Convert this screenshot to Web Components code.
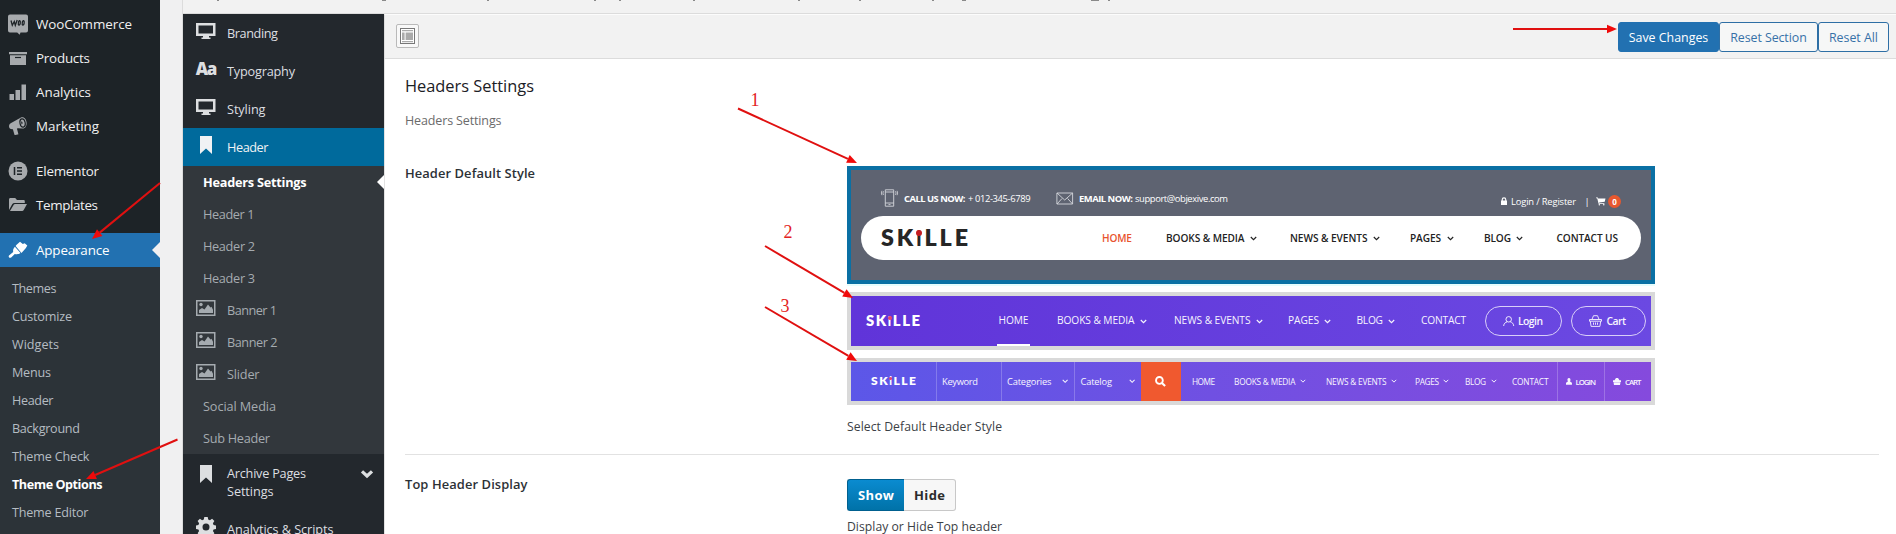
<!DOCTYPE html>
<html lang="en">
<head>
<meta charset="utf-8">
<title>Theme Options</title>
<style>
html,body{margin:0;padding:0}
body{width:1896px;height:534px;overflow:hidden;background:#f0f0f1;font-family:"Open Sans","Noto Sans",sans-serif}
</style>
</head>
<body>
<theme-options-page></theme-options-page>
<script>
const define = (name, html, after) => {
  const t = document.createElement('template');
  t.innerHTML = html;
  customElements.define(name, class extends HTMLElement {
    connectedCallback() {
      if (this.shadowRoot) return;
      this.attachShadow({mode: 'open'}).append(document.importNode(t.content, true));
      if (after) after.call(this, this.shadowRoot);
    }
  });
};

/* A label that tracks its letters so that it fills the width in its "w" attribute. */
define('fit-text', `<style>:host{display:inline-block;flex:none;white-space:nowrap}span{display:inline-block}</style><span><slot></slot></span>`, function (r) {
  const w = +this.getAttribute('w'), s = r.querySelector('span');
  this.style.width = w + 'px';
  const n = this.textContent.length;
  s.style.letterSpacing = ((w - s.getBoundingClientRect().width) / (n - (n > 1 ? 1 : 0))) + 'px';
});

/* Icons */
const ICONS = {
  woo: [20, 20, '<path d="M2 .5h16a2 2 0 0 1 2 2v14a2 2 0 0 1-2 2h-5.500l-.8 2.300-2.500-2.300H2a2 2 0 0 1-2-2v-14a2 2 0 0 1 2-2z"/><path d="M3 6.500l1.300 4.800L6.300 7.500l1 3.800L9.200 6M11.700 6.700c-1.200-.3-2 4-.8 4.400 1.300.3 2-4 .8-4.400zM15.600 6.700c-1.200-.3-2 4-.8 4.400 1.300.3 2-4 .8-4.400z" fill="none" stroke="#1d2327" stroke-width="1.300"/>'],
  box: [20, 20, '<path d="M1 4h18v2.300H1zM2 7.300h16V17H2z"/><path d="M7 9.500h6" stroke="#1d2327" stroke-width="1.200"/>'],
  bars: [20, 20, '<path d="M1.500 12h4.500v6H1.500zM7.500 8h4.500v10H7.500zM13.500 2.500H18V18h-4.500z"/>'],
  horn: [20, 20, '<path d="M13 1.500c3.200-1 5.500 2 5.600 5.500.1 3.500-1.800 5.800-4 5.500l-4.500-.3-1.200.2 1.400 5.300c.1.600-.1.800-.7.900l-2.300.4c-.5.100-.8-.1-.9-.6l-1.500-5.200C2.500 13.500 1 12 1 10.200c0-1.900 1-3 3-3.800z"/><ellipse cx="14.600" cy="7" rx="2.600" ry="4.200" transform="rotate(-12 14.600 7)" fill="none" stroke="#1d2327" stroke-width="1.200"/><path d="M13 5.500c1.800-.2 2.200 2 .6 3z" fill="#1d2327"/>'],
  elementor: [20, 20, '<circle cx="10" cy="10" r="9.500"/><path d="M6.500 6v8M9 6.700h5M9 10h5M9 13.300h5" stroke="#1d2327" stroke-width="1.500"/>'],
  folder: [20, 20, '<path d="M1 15V4.500C1 3.600 1.500 3 2.500 3h4.700L9 5h6.500c.8 0 1.300.5 1.300 1.300V8H6.500c-1 0-1.700.4-2.300 1.200z"/><path d="M2 16l3.700-6.200c.3-.5.700-.7 1.300-.7h12L15.700 15c-.4.700-.8 1-1.500 1z"/>'],
  brush: [20, 20, '<path d="M8.600 4.700L12 1.800l2.800 2.300L16.700 3.300 19.300 5.500 17.900 8 13.500 12.900 7.600 6z"/><path d="M6.900 6.700l5.600 6.400c-1.600 1.300-3.700 1.300-5.700.9L3.200 17.400c-1.500 1.200-3.200-.4-2.200-2L5.200 12c-.4-2 .2-3.900 1.700-5.300z"/>'],
  desktop: [20, 16, '<path fill-rule="evenodd" d="M0 0h19.500v13H13v1.500h1.500V16h-9v-1.500H7V13H0zM2.500 2.500v8h14.500v-8z"/>'],
  mark: [12, 18, '<path d="M0 0h12v18l-6-5.500L0 18z"/>'],
  image: [20, 16, '<path fill-rule="evenodd" d="M0 0h19.500v16H0zM1.500 1.500v13h16.500v-13z"/><circle cx="5" cy="4.500" r="1.700"/><path d="M3 13v-3l3-2 2.500 1.500 3.500-5 2.500 3 1-.8 1.500 3V13z"/>'],
  down: [14, 10, '<path d="M2 2.300l5 4.700 5-4.700" fill="none" stroke="currentColor" stroke-width="3.200"/>'],
  gear: [20, 20, '<path fill-rule="evenodd" d="M8.300 0h3.400l.5 2.600 1.700.7L16.100 1.800l2.300 2.300-1.500 2.200.7 1.700 2.400.5v3.400l-2.400.5-.7 1.700 1.500 2.200-2.300 2.300-2.200-1.500-1.700.7-.5 2.400H8.300l-.5-2.400-1.700-.7-2.200 1.500-2.300-2.300 1.500-2.200-.7-1.700L0 11.900V8.500L2.400 8l.7-1.700-1.500-2.200 2.300-2.300 2.200 1.500 1.700-.7zM10 6.500a3.500 3.500 0 1 0 0 7 3.500 3.500 0 0 0 0-7z"/>'],
  layout: [15, 16, '<rect x=".5" y=".5" width="14" height="15" fill="#fff" stroke="#777"/><path d="M2 2h11v1.200H2zM2 4.500h2.600v7.500H2zM5.600 4.500H13v7.500H5.600zM2 13h11v1.200H2z" fill="#aaa"/>'],
  caret: [7, 5, '<path d="M.8 1l2.700 2.700L6.200 1" fill="none" stroke="currentColor" stroke-width="1.150"/>'],
  phone: [17, 18, '<path d="M4.300.8h8.400v16.400H4.300zM4.300 3h8.400M4.300 14h8.400M7.500 15.600h2" fill="none" stroke="currentColor" stroke-width=".9"/><path d="M2.500 2.200Q1.300 4 2.500 6M.9 1.800Q-.2 4 .9 6.200M14.500 2.200Q15.700 4 14.500 6M16.100 1.800Q17.200 4 16.100 6.200" fill="none" stroke="currentColor" stroke-width=".8"/>'],
  mail: [18, 13, '<path d="M.9 1h15.700v11H.9zM1 1l7.700 7L16.600 1M1 12l5-5.500M16.600 12l-5-5.500" fill="none" stroke="currentColor" stroke-width=".9"/>'],
  lock: [6, 8, '<path fill-rule="evenodd" d="M.7 3.500V2.600a2.300 2.300 0 0 1 4.600 0v.9H6V8H0V3.500zm1.100 0h2.400v-.9a1.200 1.200 0 0 0-2.400 0z"/>'],
  cart: [10, 9, '<path d="M0 .5h1.900l.4 1H10L9.200 5 3.300 5.700l.2.700h5.300v.8H2.700L1.300 1.400H0z"/><circle cx="3.500" cy="8.200" r=".8"/><circle cx="8.200" cy="8.200" r=".8"/>'],
  user: [12, 11, '<circle cx="6" cy="3.500" r="2.900" fill="none" stroke="currentColor"/><path d="M.7 10.500C.9 8 2.400 6.600 4.300 6.200M7.700 6.200c1.900.4 3.400 1.800 3.600 4.300" fill="none" stroke="currentColor"/>'],
  basket: [13, 12, '<path d="M.5 4.500h12v1.700H.5zM1.300 6.200l.8 5.200h8.800l.8-5.200M3 4.300L4.500.7h4L10 4.300M4.500 7.500v2.300M6.500 7.500v2.300M8.500 7.500v2.300" fill="none" stroke="currentColor" stroke-width=".9"/>'],
  search: [12, 12, '<circle cx="4.800" cy="4.800" r="3.700" fill="none" stroke="currentColor" stroke-width="2"/><path d="M7.500 7.500l3.500 3.500" stroke="currentColor" stroke-width="2.300"/>'],
  person: [7, 8, '<path d="M3.500 0C5 0 5.500 1.200 5.200 2.500 5 3.500 4.800 4 5 4.500L7 5.600V8H0V5.600l2-1.100c.2-.5 0-1-.2-2C1.500 1.200 2 0 3.500 0z"/>'],
  bag: [8, 7, '<path d="M0 2.300h1.500L3 0h2l1.500 2.300H8V4H0zM.5 4.300h7L7 7H1z"/>'],
};
define('ui-icon', `<style>:host{display:block;flex:none;line-height:0}svg{display:block;fill:currentColor;overflow:visible}</style>`, function (r) {
  const [w, h, d] = ICONS[this.getAttribute('name')];
  const s = +(this.getAttribute('scale') || 1);
  r.innerHTML += `<svg width="${w * s}" height="${h * s}" viewBox="0 0 ${w} ${h}">${d}</svg>`;
});

/* SKiLLE word mark */
define('brand-logo', `<style>
:host{display:block;flex:none;font-family:Lato,sans-serif;font-weight:800;color:var(--ink,#fff)}
fit-text{line-height:1}
b{display:inline-block;font-size:.88em;line-height:1;font-weight:900;position:relative}
b::before{content:"";position:absolute;left:0;top:.06em;width:.29em;height:.29em;border-radius:50%;background:var(--dot,#e8456b)}
</style>`, function (r) {
  r.innerHTML += `<fit-text w="${this.getAttribute('w')}">SK<b>i</b>LLE</fit-text>`;
});

/* A run of inline pieces: [x, width, markup]; the spaces between become margins. */
const run = (start, items) => {
  let end = start;
  return items.map(([x, w, html]) => {
    const m = x - end; end = x + w;
    return `<div style="margin-left:${m}px;width:${w}px">${html}</div>`;
  }).join('');
};
const label = (x, w, text, cls = '') => [x, w, `<fit-text class="${cls}" w="${w}">${text}</fit-text>`];
const icon = (x, w, name, scale = 1) => [x, w, `<ui-icon name="${name}" scale="${scale}"></ui-icon>`];

/* Admin menu */
define('menu-item', `<style>
:host{display:flex;align-items:center;height:34px;padding-left:8px;gap:8px;font-size:13.4px;color:#f0f0f1;position:relative}
ui-icon{color:#a7aaad}
:host([current]){background:#2271b1;color:#fff}
:host([current]) ui-icon{color:#fff}
:host([current])::after{content:"";position:absolute;right:0;top:9px;border:8px solid transparent;border-left:0;border-right-color:#f0f0f1}
</style><slot></slot>`, function (r) {
  const i = document.createElement('ui-icon');
  i.setAttribute('name', this.getAttribute('icon'));
  r.querySelector('slot').before(i);
});
define('admin-menu', `<style>
:host{display:flex;flex-direction:column;width:160px;height:527px;padding-top:7px;background:#1d2327}
.gap{height:11px}
ul{flex:1;margin:0;padding:8px 0 0 12px;list-style:none;background:#2c3338;color:#b5bcc2;font-size:12.600px}
li{height:28px;line-height:28px}
.on{color:#fff;font-weight:700}
</style>
<menu-item icon="woo"><fit-text w="96">WooCommerce</fit-text></menu-item>
<menu-item icon="box"><fit-text w="54">Products</fit-text></menu-item>
<menu-item icon="bars"><fit-text w="55">Analytics</fit-text></menu-item>
<menu-item icon="horn"><fit-text w="63">Marketing</fit-text></menu-item>
<div class="gap"></div>
<menu-item icon="elementor"><fit-text w="63">Elementor</fit-text></menu-item>
<menu-item icon="folder"><fit-text w="62">Templates</fit-text></menu-item>
<div class="gap"></div>
<menu-item icon="brush" current><fit-text w="73.5">Appearance</fit-text></menu-item>
<ul>
<li><fit-text w="44.5">Themes</fit-text></li><li><fit-text w="60">Customize</fit-text></li>
<li><fit-text w="47">Widgets</fit-text></li><li><fit-text w="39">Menus</fit-text></li>
<li><fit-text w="41.5">Header</fit-text></li><li><fit-text w="68">Background</fit-text></li>
<li><fit-text w="77.5">Theme Check</fit-text></li><li class="on"><fit-text w="90.5">Theme Options</fit-text></li>
<li><fit-text w="76.5">Theme Editor</fit-text></li>
</ul>`);

/* Section list of the options panel */
define('section-item', `<style>
:host{display:flex;align-items:center;height:38px;font-size:12.7px;line-height:18px;color:#dddfe1;position:relative}
.ic{width:20px;margin:0 11px 4px 13px;display:flex;justify-content:center}
:host([sub]){height:32px;color:#a5abb0}
:host([plain]) .ic{width:0;margin:0 20px 0 0}
:host([active]){background:#006a9c;color:#f0f2f4}
:host([selected]){color:#fff;font-weight:700}
:host([selected])::after{content:"";position:absolute;right:0;top:9px;border:7px solid transparent;border-left:0;border-right-color:#fff}
:host([tall]){height:56px}
:host([tall]) .ic{margin-bottom:17px}
::slotted(ui-icon[name=down]){position:relative;margin-left:54px;margin-bottom:17px}
</style><div class="ic"><slot name="icon"></slot></div><slot></slot>`);
const sec = (attrs, ic, ...lines) => `<section-item ${attrs}>${ic ? (ic === 'Aa' ? '<span slot="icon" class="aa">Aa</span>' : `<ui-icon slot="icon" name="${ic}"></ui-icon>`) : ''}<div>${lines.map(([t, w]) => `<fit-text w="${w}">${t}</fit-text>`).join('<br>')}</div>${attrs === 'tall' ? '<ui-icon name="down"></ui-icon>' : ''}</section-item>`;
define('section-list', `<style>
:host{display:block;width:201px;height:520px;overflow:hidden;background:#23282d}
.sub{background:#32373c}
.aa{font:900 17px/18px "Open Sans",sans-serif;letter-spacing:-1.3px}
</style>
${sec('', 'desktop', ['Branding', 51])}
${sec('', 'Aa', ['Typography', 68])}
${sec('', 'desktop', ['Styling', 38.5])}
${sec('active', 'mark', ['Header', 41.5])}
<div class="sub">
${sec('sub plain selected', '', ['Headers Settings', 103.5])}
${sec('sub plain', '', ['Header 1', 51.5])}
${sec('sub plain', '', ['Header 2', 52])}
${sec('sub plain', '', ['Header 3', 52])}
${sec('sub', 'image', ['Banner 1', 50])}
${sec('sub', 'image', ['Banner 2', 50.5])}
${sec('sub', 'image', ['Slider', 32.5])}
${sec('sub plain', '', ['Social Media', 73])}
${sec('sub plain', '', ['Sub Header', 67])}
</div>
${sec('tall', 'mark', ['Archive Pages', 79], ['Settings', 46.5])}
${sec('', 'gear', ['Analytics &amp; Scripts', 106.5])}`);

/* Toolbar */
define('tool-bar', `<style>
:host{display:flex;align-items:flex-start;box-sizing:border-box;height:45px;background:#f2f2f2;border-top:1px solid #fcfcfc;border-bottom:1px solid #dcdcdc;border-left:1px solid #dedede;padding:0 7px 0 11px;font-size:12.4px}
.exp{box-sizing:border-box;width:23px;height:24px;margin-top:9px;border:1px solid #b9b9b9;border-radius:2px;background:#f8f8f8;display:flex;align-items:center;justify-content:center}
.sp{flex:1}
.btn{box-sizing:border-box;height:30px;margin-top:7px;border:1px solid #2e6fa5;border-radius:3px;background:#f6f7f7;color:#3671a8;display:flex;align-items:center;justify-content:center}
.pri{background:#2271b1;color:#fff;border-color:#2271b1}
</style>
<div class="exp"><ui-icon name="layout"></ui-icon></div><div class="sp"></div>
<div class="btn pri" style="width:101px"><fit-text w="79.500">Save Changes</fit-text></div>
<div class="btn" style="width:99px"><fit-text w="76.500">Reset Section</fit-text></div>
<div class="btn" style="width:71px"><fit-text w="49">Reset All</fit-text></div>`);

/* Header previews */
define('preview-classic', `<style>
:host{display:block;box-sizing:border-box;width:808px;height:118px;border:4px solid #0a70a4;background:#5e6371;color:#fff;padding:20px 10px 0}
.top{display:flex;height:26px;font-size:9.400px;line-height:13px}
.bold{font-weight:700}
.pill{display:flex;align-items:center;height:44px;border-radius:22px;background:#fff;color:#222;font-size:10.100px;line-height:13px;font-weight:600}
.hot{color:#e8532f}
brand-logo{--ink:#262626;--dot:#c41c22;font-size:23.3px}
.top>div{display:flex;align-items:center}
.left{height:22px;margin-top:-3px}.right{height:18px;margin-top:0}
.top>.left{height:22px;padding:0}.top>.right{height:18px;padding-top:2px}
.badge{width:13px;height:13px;border-radius:50%;background:#e8582f;text-align:center;font:700 8px/13px "Open Sans",sans-serif}
ui-icon[name=phone],ui-icon[name=mail]{color:#d5d7dc}
</style>
<div class="top">
<div class="left">${run(861, [icon(881, 17, 'phone'), label(904, 61.5, 'CALL US NOW:', 'bold'), label(968, 62.5, '+ 012-345-6789'), icon(1056, 18, 'mail'), label(1079, 54, 'EMAIL NOW:', 'bold'), label(1135, 93, 'support@objexive.com')])}</div>
<div class="right">${run(1228, [icon(1501, 6, 'lock'), label(1511, 65, 'Login / Register'), label(1584.5, 3, '|'), icon(1596, 9, 'cart', .95), [1608, 13, '<div class="badge">0</div>']])}</div>
</div>
<div class="pill">${run(861, [[881, 87, '<brand-logo w="87"></brand-logo>'], label(1102, 30, 'HOME', 'hot'), label(1166, 78.5, 'BOOKS &amp; MEDIA'), icon(1249.5, 7, 'caret'), label(1290, 77.5, 'NEWS &amp; EVENTS'), icon(1372.5, 7, 'caret'), label(1410, 31, 'PAGES'), icon(1446.5, 7, 'caret'), label(1484, 27, 'BLOG'), icon(1515.5, 7, 'caret'), label(1556.5, 61.5, 'CONTACT US')])}</div>`);

define('preview-violet', `<style>
:host{display:flex;align-items:center;box-sizing:border-box;width:808px;height:58px;border:4px solid #d9d9d9;background:linear-gradient(90deg,#6034d9,#6b49e2);color:#f6f4fe;font-size:10.200px;line-height:13px;font-weight:500}
:host>*{flex:none}
.nav{margin-top:-1px}
brand-logo{font-size:14.800px;margin-top:-1px}
fit-text{position:relative;top:-1px}
.home{position:relative}
.home::after{content:"";position:absolute;left:-1.500px;top:29.500px;width:33px;height:2px;background:#fff}
.pill{box-sizing:border-box;height:30px;border:1px solid #d9cff8;border-radius:15px;display:flex;align-items:center;font-size:10.400px;font-weight:600}
.pill fit-text{top:0}
</style>
${run(851, [[866, 54, '<brand-logo w="54"></brand-logo>'], [998.5, 30, '<div class="home"><fit-text w="30">HOME</fit-text></div>'], label(1057, 77.5, 'BOOKS &amp; MEDIA'), icon(1139.5, 7, 'caret'), label(1174, 76.5, 'NEWS &amp; EVENTS'), icon(1255.5, 7, 'caret'), label(1288, 31, 'PAGES'), icon(1323.5, 7, 'caret'), label(1356.5, 26.5, 'BLOG'), icon(1387.5, 7, 'caret'), label(1421, 45, 'CONTACT'),
[1485, 77, `<div class="pill">${run(1486, [icon(1503, 11, 'user', .95), label(1518, 25, 'Login')])}</div>`],
[1571, 75, `<div class="pill">${run(1572, [icon(1589, 13, 'basket'), label(1606.5, 19.5, 'Cart')])}</div>`]])}`);

define('preview-search', `<style>
:host{display:flex;align-items:center;box-sizing:border-box;width:808px;height:47px;border:4px solid #d9d9d9;background:linear-gradient(90deg,#5c57e8,#7050e2 45%,#854add);color:#f8f6fe;font-size:8.300px;line-height:12px;font-weight:500}
brand-logo{font-size:12px;margin-top:-1px}
.f{font-size:9.300px}
.b{font-weight:600;font-size:7.800px;margin-top:-1px}
.line{width:1px;height:39px;background:#ffffff38}
.go{height:39px;background:#f0592f;color:#fff;display:flex;align-items:center;justify-content:center}
</style>
${run(851, [[871, 45, '<brand-logo w="45"></brand-logo>'], [936, 1, '<div class="line"></div>'], label(942, 36, 'Keyword', 'f'), [1001, 1, '<div class="line"></div>'], label(1007, 44.5, 'Categories', 'f'), icon(1061.5, 6, 'caret', .9), [1074, 1, '<div class="line"></div>'], label(1080.5, 31.5, 'Catelog', 'f'), icon(1128.5, 6, 'caret', .9), [1140.5, 40.5, '<div class="go"><ui-icon name="search" scale=".92"></ui-icon></div>'],
label(1192, 23, 'HOME'), label(1234, 61.5, 'BOOKS &amp; MEDIA'), icon(1299.5, 6, 'caret', .85), label(1326, 60.500, 'NEWS &amp; EVENTS'), icon(1390.5, 6, 'caret', .85), label(1415, 24, 'PAGES'), icon(1442.5, 6, 'caret', .85), label(1465, 21, 'BLOG'), icon(1490.5, 6, 'caret', .85), label(1512, 36.500, 'CONTACT'), [1557, 1, '<div class="line"></div>'], icon(1565.5, 6, 'person', .85), label(1575.5, 20.500, 'LOGIN', 'b'), [1604, 1, '<div class="line"></div>'], icon(1613, 8, 'bag'), label(1625, 16.500, 'CART', 'b')])}`);

define('switch-buttons', `<style>
:host{display:flex;width:109px;height:32px;font-size:13px;font-weight:700}
div{box-sizing:border-box;display:flex;align-items:center;justify-content:center}
.on{width:57px;background:linear-gradient(#0a8bd0,#0072a8);border:1px solid #00608f;border-right:0;border-radius:3px 0 0 3px;color:#fff}
.off{width:52px;background:#f7f7f7;border:1px solid #c8c8c8;border-left:0;border-radius:0 3px 3px 0;color:#2c2c2c}
</style><div class="on"><fit-text w="36">Show</fit-text></div><div class="off"><fit-text w="31">Hide</fit-text></div>`);

define('options-form', `<style>
:host{display:block;height:475px;background:#fff;border-left:1px solid #e2e2e2;padding:15px 17px 0 20px;overflow:hidden;box-sizing:border-box}
h2{margin:0;font-size:16.400px;line-height:24px;font-weight:500;color:#1b2025}
p{margin:14px 0 0;font-size:12.500px;line-height:18px;color:#6b6b6b}
.row{display:grid;grid-template-columns:442px 1fr}
.one{height:325px;border-bottom:1px solid #e2e2e2;box-sizing:border-box;padding-top:36px}
.name{font-size:12.900px;line-height:18px;font-weight:600;color:#2c3136}
.one .name{margin-top:-2px}
.desc{font-size:12.200px;line-height:18px;color:#3c4146}
.glow{width:808px;height:2px;background:#e6fdfd;margin-bottom:6px}
preview-violet{margin-bottom:8px}
preview-search{margin-bottom:13px}
.two{padding-top:21px}
.two .name{margin-top:-1px}
switch-buttons{margin:3px 0 7px}
</style>
<h2><fit-text w="129">Headers Settings</fit-text></h2>
<p><fit-text w="96.500">Headers Settings</fit-text></p>
<div class="row one"><div class="name"><fit-text w="130">Header Default Style</fit-text></div>
<div><preview-classic></preview-classic><div class="glow"></div><preview-violet></preview-violet><preview-search></preview-search><div class="desc"><fit-text w="155">Select Default Header Style</fit-text></div></div></div>
<div class="row two"><div class="name"><fit-text w="122.500">Top Header Display</fit-text></div>
<div><switch-buttons></switch-buttons><div class="desc"><fit-text w="155">Display or Hide Top header</fit-text></div></div></div>`);

/* Red pointers drawn over the page */
const arrow = (x1, y1, x2, y2) => {
  const a = Math.atan2(y2 - y1, x2 - x1), c = Math.cos(a), s = Math.sin(a), L = 10, W = 4.3;
  const bx = x2 - L * c, by = y2 - L * s;
  return `<path d="M${x1} ${y1}L${bx} ${by}" stroke="#e01010" stroke-width="2"/><path d="M${x2} ${y2}L${bx - W * s} ${by + W * c}L${bx + W * s} ${by - W * c}z" fill="#f00a0a"/>`;
};
define('note-layer', `<style>:host{position:absolute;left:0;top:0;width:1896px;height:534px;pointer-events:none}svg{display:block}text{font:18px "Liberation Serif",serif;fill:#e32222;text-anchor:middle}</style>
<svg width="1896" height="534">
${arrow(160, 183, 92, 239)}${arrow(177.5, 439.5, 86, 479)}${arrow(738, 108.500, 857, 163)}${arrow(765, 246, 853, 298)}${arrow(765, 307, 857, 361)}${arrow(1513, 29, 1617, 29)}
<text x="755" y="106">1</text><text x="788" y="238">2</text><text x="785" y="312">3</text></svg>`);

define('theme-options-page', `<style>
:host{display:flex;width:1896px;height:534px;position:relative;overflow:hidden}
.panel{flex:none;width:1713px;margin-left:22px;border-left:1px solid #dcdcdc}
.strip{height:13px;background:#f2f2f2;border-bottom:1px solid #dcdcdc}
.strip svg{display:block}
.body{display:flex}
.main{flex:1}
</style>
<admin-menu></admin-menu>
<div class="panel">
<div class="strip"><svg width="1713" height="13" fill="#8a8a8a">${[[34,2],[199,4],[304,2],[411,2],[436,2],[510,2],[615,2],[676,2],[749,2],[779,4],[908,8],[925,2]].map(([x, w]) => `<rect x="${x}" width="${w}" height="1"/>`).join('')}</svg></div>
<div class="body"><section-list></section-list><div class="main"><tool-bar></tool-bar><options-form></options-form></div></div>
</div>
<note-layer></note-layer>`);
</script>
</body>
</html>
